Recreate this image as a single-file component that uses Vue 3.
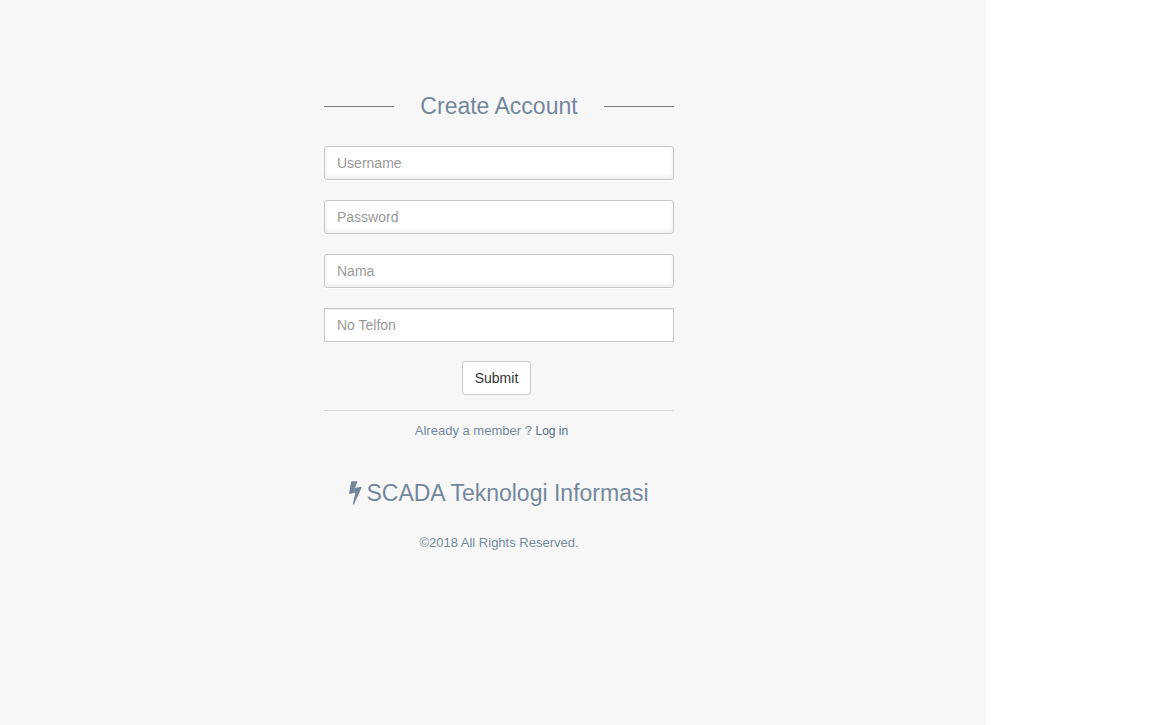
<script setup>
import { reactive } from 'vue'

const fields = [
  { id: 'username', label: 'Username', type: 'text' },
  { id: 'password', label: 'Password', type: 'password' },
  { id: 'nama', label: 'Nama', type: 'text' },
  { id: 'telfon', label: 'No Telfon', type: 'tel' },
]
const account = reactive({ username: '', password: '', nama: '', telfon: '' })
</script>

<template>
  <div class="page">
    <main class="panel">
      <form class="register" @submit.prevent>
        <h1 class="title">Create Account</h1>
        <input
          v-for="field in fields"
          :id="field.id"
          :key="field.id"
          v-model="account[field.id]"
          class="field"
          :class="{ flat: field.type === 'tel' }"
          :type="field.type"
          :placeholder="field.label"
          :aria-label="field.label"
        />
        <button class="submit" type="submit">Submit</button>
        <div class="footer">
          <p class="member">Already a member ? <a href="#login">Log in</a></p>
          <h2 class="brand">
            <svg class="bolt" viewBox="0 0 13 24" aria-hidden="true">
              <path d="M2.8 0.3H7.6Q8.4 0.4 8.2 1.1L6 7.1L11.9 5.7Q12.9 5.6 12.6 6.5L5.1 23.2Q4.8 23.8 4.2 23.6Q3.7 23.4 3.8 22.9L6.5 11.6L0.9 13Q0 13.1 0.1 12.2L2.1 0.9Q2.2 0.4 2.8 0.3Z" />
            </svg>
            <span>SCADA Teknologi Informasi</span>
          </h2>
          <p class="rights">©2018 All Rights Reserved.</p>
        </div>
      </form>
    </main>
  </div>
</template>

<style>
body {
  margin: 0;
  background: #fff;
}
</style>

<style scoped>
.page {
  display: flex;
  min-height: 100vh;
  padding-right: 166px;
  font-family: "Liberation Sans", Arial, sans-serif;
  font-size: 13px;
  line-height: 20px;
  color: #73879c;
}

.panel {
  box-sizing: border-box;
  flex: 1;
  padding: 96px 0 40px 12px;
  background: #f7f7f7;
}

.register {
  display: flex;
  flex-direction: column;
  width: 100%;
  max-width: 350px;
  margin: 0 auto;
  text-shadow: 0 1px 0 #fff;
}

.title,
.brand {
  display: flex;
  align-items: center;
  font-size: 23px;
  font-weight: 400;
  line-height: 20px;
}

.title {
  justify-content: space-between;
  margin: 0 0 30px;
}

.title::before,
.title::after {
  content: "";
  width: 20%;
  height: 1px;
  background: #7e7e7e;
}

.field {
  box-sizing: border-box;
  width: 100%;
  height: 34px;
  margin: 0 0 20px;
  padding: 6px 12px;
  border: 1px solid #c8c8c8;
  border-radius: 3px;
  background: #fff;
  box-shadow: 0 1px 0 #fff, inset 0 -2px 5px rgba(0, 0, 0, 0.08);
  font: 14px/20px "Liberation Sans", Arial, sans-serif;
  color: #555;
}

.field::placeholder {
  color: #999;
  opacity: 1;
}

.field.flat {
  margin-bottom: 19px;
  border-radius: 0;
  box-shadow: inset 0 1px 1px rgba(0, 0, 0, 0.075);
}

.submit {
  align-self: center;
  height: 34px;
  margin-right: 5px;
  padding: 0 12px;
  border: 1px solid #ccc;
  border-radius: 3px;
  background: #fff;
  font: 14px/20px "Liberation Sans", Arial, sans-serif;
  color: #333;
}

.footer {
  margin-top: 15px;
  padding-top: 10px;
  border-top: 1px solid #d8d8d8;
  text-align: center;
}

.member {
  margin: 0;
  padding-right: 15px;
}

.member a {
  font-size: 12px;
  color: #4f6a88;
  text-decoration: none;
}

.brand {
  justify-content: center;
  gap: 4px;
  height: 24px;
  margin: 40px 0 28px;
}

.bolt {
  width: 13px;
  height: 24px;
  fill: currentColor;
}

.rights {
  margin: 0;
}
</style>
